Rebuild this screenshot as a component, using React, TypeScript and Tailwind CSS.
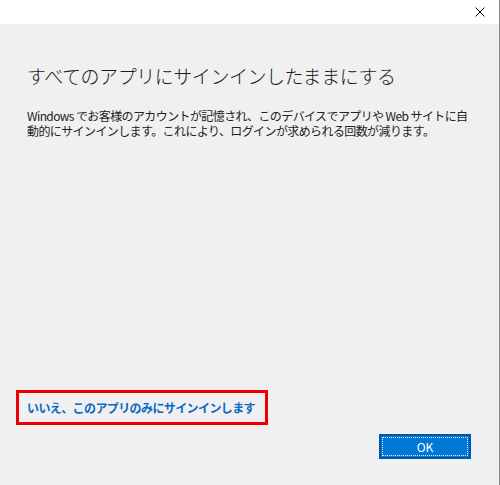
export default function App() {
  return (
    <div
      className="flex h-[485px] w-[500px] flex-col border-r border-[#8a8a8a] bg-[#f0f0f0] text-[#1e1e1e]"
      style={{ fontFamily: '"Noto Sans CJK JP", "Noto Sans", sans-serif' }}
    >
      {/* タイトルバー */}
      <div className="flex h-6 items-center justify-end bg-white pr-[14px]">
        <svg width="10" height="10" viewBox="0 0 10 10" className="text-black">
          <path d="M0.5 0.5 L9.5 9.5 M9.5 0.5 L0.5 9.5" stroke="currentColor" strokeWidth="1" />
        </svg>
      </div>

      {/* 本文 */}
      <div className="flex flex-1 flex-col pl-[27px] pt-[38px]">
        <h1 className="text-[19px] font-light leading-7 tracking-[-0.45px] text-[#1a1a1a]">
          すべてのアプリにサインインしたままにする
        </h1>
        <p className="mt-[18px] whitespace-nowrap text-[12px] leading-[15px] tracking-[-0.6px] text-[#222]">
          Windows でお客様のアカウントが記憶され、このデバイスでアプリや Web サイトに自
          <br />
          動的にサインインします。これにより、ログインが求められる回数が減ります。
        </p>
      </div>

      {/* リンク */}
      <div className="ml-4 flex h-[35px] w-[252px] items-center border-[3px] border-[#ee0000] pl-2">
        <a href="#" className="text-[12px] font-bold tracking-[-0.6px] text-[#0a68c4]">
          いいえ、このアプリのみにサインインします
        </a>
      </div>

      {/* ボタン */}
      <div className="flex justify-end pr-[28px] pt-[9px] pb-[26px]">
        <button className="h-[25px] w-[92px] border-2 border-[#0058a8] bg-[#0078d7] text-[12px] text-white outline-1 outline-dotted outline-white/90 -outline-offset-4">
          OK
        </button>
      </div>
    </div>
  );
}
